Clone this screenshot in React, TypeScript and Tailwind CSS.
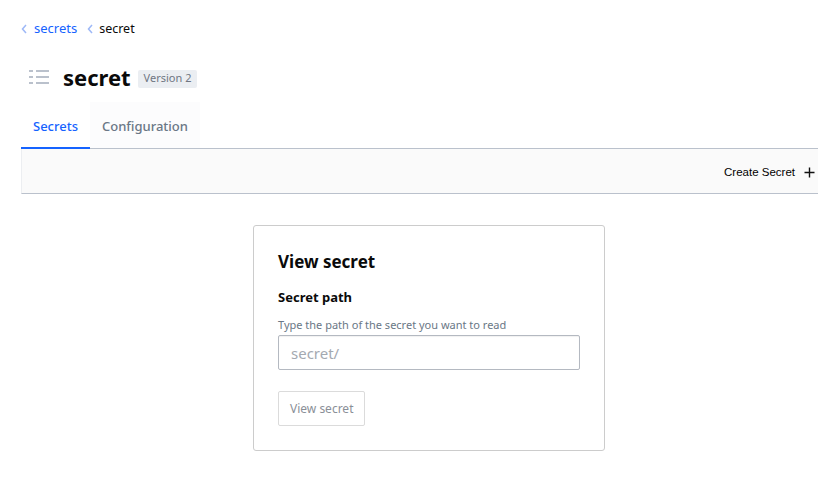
import React from 'react';

const ListIcon: React.FC = () => (
  <svg width="20" height="14" viewBox="0 0 20 14" className="text-[#bac1cc]">
    <rect x="0" y="0" width="4" height="2" fill="currentColor" />
    <rect x="7" y="0" width="13" height="2" fill="currentColor" />
    <rect x="0" y="6" width="4" height="2" fill="currentColor" />
    <rect x="7" y="6" width="13" height="2" fill="currentColor" />
    <rect x="0" y="12" width="4" height="2" fill="currentColor" />
    <rect x="7" y="12" width="13" height="2" fill="currentColor" />
  </svg>
);

const Chevron: React.FC = () => (
  <svg width="6" height="10" viewBox="0 0 6 10" className="text-[#9db8f7]">
    <path d="M5 1 L1.5 5 L5 9" stroke="currentColor" strokeWidth="1.5" fill="none" />
  </svg>
);

const App: React.FC = () => {
  return (
    <div className="w-[818px] h-[499px] overflow-hidden bg-white font-['Noto_Sans',sans-serif] text-[#0a0a0a]">
      <div className="w-[816px] ml-[21px]">
        {/* breadcrumb */}
        <nav className="flex items-center h-[20px] mt-[19px] text-[13px]">
          <Chevron />
          <span className="ml-[7px] text-[#1563ff]">secrets</span>
          <span className="ml-[10px]"><Chevron /></span>
          <span className="ml-[6px] text-[12.5px]">secret</span>
        </nav>

        {/* title */}
        <div className="flex items-center mt-[24px] h-[28px]">
          <span className="ml-[8px]"><ListIcon /></span>
          <h1 className="ml-[14px] text-[22px] font-bold leading-none text-[#0a0a0a]">secret</h1>
          <span className="ml-[7px] mt-[3px] px-[6px] h-[18px] flex items-center rounded-[2px] bg-[#ebeef2] text-[11px] text-[#6f7682]">
            Version 2
          </span>
        </div>

        {/* tabs */}
        <div className="flex mt-[11px] h-[47px] border-b border-[#bac1cc]">
          <div className="px-[12px] pt-[4px] flex items-center border-b-2 border-[#1563ff] -mb-px text-[13px] font-medium text-[#1563ff]">
            Secrets
          </div>
          <div className="px-[12px] pt-[3px] flex items-center bg-[#fcfcfd] text-[13px] font-medium text-[#6a7786]">
            Configuration
          </div>
        </div>

        {/* toolbar */}
        <div className="flex justify-end items-center h-[45px] pt-[3px] bg-[#fafafa] border-b border-l border-[#bac1cc] border-l-[#eceef1] pr-[22px]">
          <span className="font-['Liberation_Sans',sans-serif] text-[11.5px] text-black">Create Secret</span>
          <svg width="11" height="11" viewBox="0 0 11 11" className="ml-[9px]">
            <path d="M5.5 0.5 V10.5 M0.5 5.5 H10.5" stroke="#111" strokeWidth="1.4" />
          </svg>
        </div>

        {/* card */}
        <div className="flex justify-center mt-[31px]">
          <div className="w-[352px] border border-[#ccc] rounded-[3px] px-[24px] pt-[24px] pb-[24px]">
            <h2 className="text-[17px] font-bold leading-[24px]">View secret</h2>
            <div className="mt-[14px] text-[13px] font-bold leading-[18px]">Secret path</div>
            <div className="mt-[11px] text-[11px] text-[#6a7786] leading-[15px]">
              Type the path of the secret you want to read
            </div>
            <input
              className="mt-[3px] w-full h-[35px] border border-[#b4b9c1] rounded-[2px] px-[12px] text-[15px] text-[#0a0a0a] placeholder:text-[#a4a9b1] outline-none shadow-[inset_0_1px_1px_rgba(0,0,0,0.06)]"
              placeholder="secret/"
            />
            <button
              className="block mt-[21px] h-[35px] px-[11px] border border-[#dbdbdb] rounded-[2px] bg-white text-[12px] text-[#8a8f98]"
              disabled
            >
              View secret
            </button>
          </div>
        </div>
      </div>
    </div>
  );
};

export default App;
